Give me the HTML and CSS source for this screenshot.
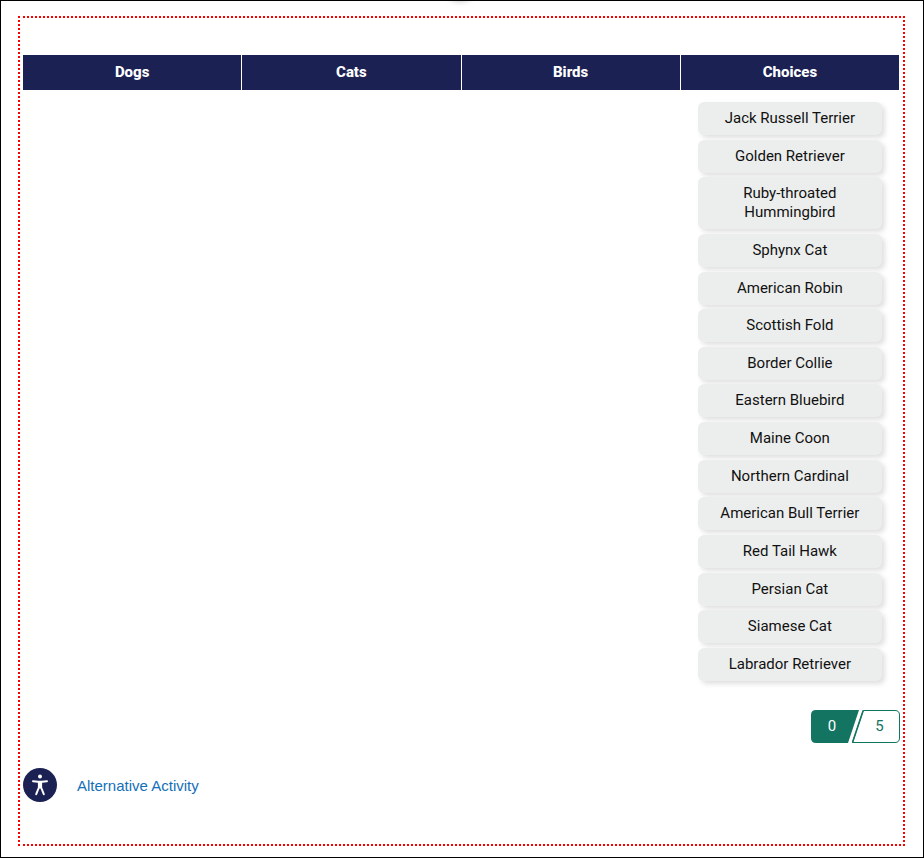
FILE: index.html
```html
<!DOCTYPE html>
<html lang="en">
<head>
    <meta charset="UTF-8">
    <meta name="viewport" content="width=device-width,initial-scale=1.0">
    <title>Sorting Activity</title>
    <link rel="stylesheet" href="styles.css">
</head>
<body>

    <div class="page">
        <div class="page-shadow"></div>
        <main class="activity">
            <div class="board">
                <section class="column">
                    <h2>Dogs</h2>
                </section>
                <section class="column">
                    <h2>Cats</h2>
                </section>
                <section class="column">
                    <h2>Birds</h2>
                </section>
                <section class="column">
                    <h2>Choices</h2>
                    <div class="choices">
                        <button class="choice" type="button">Jack Russell Terrier</button>
                        <button class="choice" type="button">Golden Retriever</button>
                        <button class="choice" type="button">Ruby-throated Hummingbird</button>
                        <button class="choice" type="button">Sphynx Cat</button>
                        <button class="choice" type="button">American Robin</button>
                        <button class="choice" type="button">Scottish Fold</button>
                        <button class="choice" type="button">Border Collie</button>
                        <button class="choice" type="button">Eastern Bluebird</button>
                        <button class="choice" type="button">Maine Coon</button>
                        <button class="choice" type="button">Northern Cardinal</button>
                        <button class="choice" type="button">American Bull Terrier</button>
                        <button class="choice" type="button">Red Tail Hawk</button>
                        <button class="choice" type="button">Persian Cat</button>
                        <button class="choice" type="button">Siamese Cat</button>
                        <button class="choice" type="button">Labrador Retriever</button>
                    </div>
                </section>
            </div>

            <div class="score">
                <svg class="score-shape" viewBox="0 0 89 33" aria-hidden="true">
                    <path d="M5 0H48L37 33H5Q0 33 0 28V5Q0 0 5 0Z" fill="#137561"/>
                    <path d="M52.2 .5H84Q88.5 .5 88.5 5V28Q88.5 32.5 84 32.5H41.5Z" fill="#fff" stroke="#137561"/>
                    <path d="M52.2 .5L41.5 32.5" stroke="#137561" stroke-width="1.6"/>
                </svg>
                <span class="score-value">0</span>
                <span class="score-total">5</span>
            </div>

            <div class="alternative">
                <svg class="access-icon" viewBox="0 0 34 34" aria-hidden="true">
                    <circle cx="17" cy="17" r="17" fill="#1c2153"/>
                    <circle cx="17" cy="8.5" r="2" fill="#fff"/>
                    <path d="M10 13.2L15 13.8H19L24 13.2M15.9 14V19.5L13.2 26.2M18.1 14V19.5L20.8 26.2" fill="none" stroke="#fff" stroke-width="2" stroke-linecap="round" stroke-linejoin="round"/>
                    <path d="M15 13.5H19V20.5H15Z" fill="#fff"/>
                </svg>
                <a href="#alternative">Alternative Activity</a>
            </div>
        </main>
    </div>

</body>
</html>
```
FILE: styles.css
```css
* {
    box-sizing: border-box;
}

body {
    margin: 0;
    background-color: #fff;
    font-family: Roboto, "Liberation Sans", sans-serif;
    font-size: 15px;
    line-height: 19px;
    color: #111;
}

.page {
    position: relative;
    overflow: hidden;
    min-height: 100vh;
    padding: 15px 18px 10px 17px;
    border: 1px solid #000;
}

/* faint shadow that falls from the top edge */
.page-shadow {
    position: absolute;
    top: -6px;
    left: 50%;
    width: 16px;
    height: 4px;
    margin-left: -10px;
    border-radius: 50%;
    box-shadow: 0 0 6px 2px rgba(0, 0, 0, 0.25);
}

.activity {
    padding: 37px 3px 42px;
    border: 2px dotted #f00;
}

.board {
    display: grid;
    grid-template-columns: repeat(4, 1fr);
    column-gap: 1px;
    margin-right: 1px;
}

.column h2 {
    margin: 0;
    padding: 8px;
    background-color: #1c2153;
    color: #fff;
    font-size: 15px;
    font-weight: 800;
    text-align: center;
}

.choices {
    display: flex;
    flex-direction: column;
    justify-content: space-between;
    min-height: 579px;
    margin: 12px 17px 0;
}

.choice {
    padding: 7px 16px;
    border: none;
    border-radius: 6px;
    background-color: #eceeed;
    box-shadow: 3px 3px 5px rgba(0, 0, 0, 0.12);
    color: #111;
    font: inherit;
    cursor: pointer;
}

.score {
    position: relative;
    display: grid;
    grid-template-columns: 42px 1fr;
    align-items: center;
    width: 89px;
    height: 33px;
    margin: 29px 0 0 auto;
    text-align: center;
}

.score-shape {
    position: absolute;
    inset: 0;
    width: 100%;
    height: 100%;
}

.score-value,
.score-total {
    position: relative;
}

.score-value {
    color: #fff;
}

.score-total {
    padding-left: 6px;
    color: #137561;
}

.alternative {
    display: flex;
    align-items: center;
    gap: 20px;
    margin-top: 25px;
}

.access-icon {
    width: 34px;
    height: 34px;
}

.alternative a {
    color: #146fb8;
    font-family: "Liberation Sans", Arial, sans-serif;
    text-decoration: none;
}

.alternative a:hover {
    text-decoration: underline;
}
```
